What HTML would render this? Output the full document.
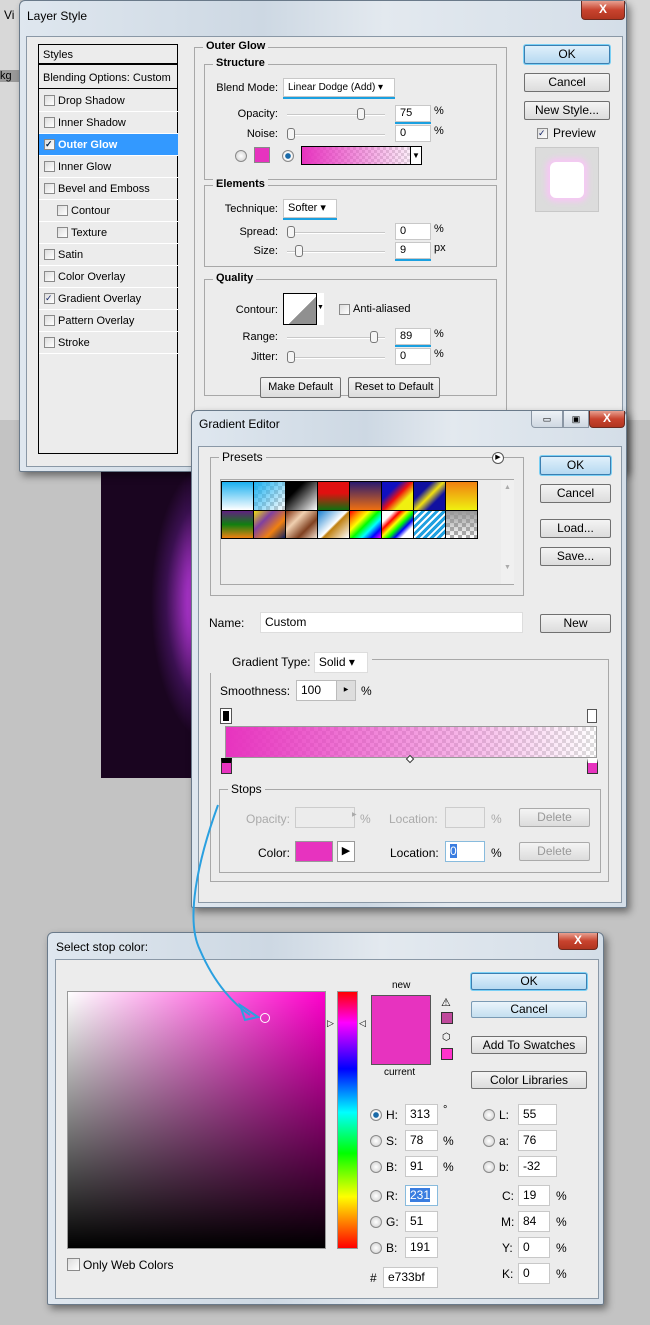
<!DOCTYPE html>
<html><head><meta charset="utf-8"><style>
*{box-sizing:border-box;margin:0;padding:0}
body{width:650px;height:1325px;background:#c3c3c3;position:relative;overflow:hidden;font-family:"Liberation Sans",sans-serif;font-size:11px;color:#000}
div,span{position:absolute}
.win{background:linear-gradient(90deg,#dfe7ef,#cdd8e3 40%,#e3e9ef 60%,#d4dee8);border:1px solid #6a7a8a;border-radius:6px 6px 2px 2px;box-shadow:3px 4px 8px rgba(0,0,0,.45)}
.cl{background:#ececec;border:1px solid #8a98a6}
.tt{font-size:12px}
.x{width:44px;height:19px;top:0;background:linear-gradient(#e8a090,#c8432e 50%,#b03520);border:1px solid #6b2a20;border-top:none;border-radius:0 0 4px 4px;color:#fff;font-weight:bold;text-align:center;line-height:17px;font-size:12px}
.fs{border:1px solid #a8a8a8}
.lg{background:#ececec;padding:0 3px;font-weight:bold;top:-8px;left:8px}
.btn{border:1px solid #707070;border-radius:2px;background:linear-gradient(#f4f4f4,#dcdcdc);text-align:center;font-size:12px}
.ok{border-color:#3c7fb1;background:linear-gradient(#e0f0fb,#b6d9f1);box-shadow:0 0 0 1px #7ad0f5}
.in{background:#fff;border:1px solid #c8c8c8;padding-left:4px}
.cb{width:11px;height:11px;border:1px solid #8a8a8a;background:linear-gradient(135deg,#ddd,#fff)}
.rd{width:12px;height:12px;border:1px solid #8a8a8a;border-radius:50%;background:radial-gradient(#fff,#ccc)}
.ul{height:2px;background:#1aa0e0}
.li{left:0;width:139px;height:22px;border-bottom:1px solid #fff;line-height:22px}
.sl{height:2px;background:#c8c8c8;border-bottom:1px solid #fff}
.th{width:8px;height:12px;border:1px solid #777;border-radius:3px;background:#f5f5f5}
.r{text-align:right}
.chk{background:repeating-conic-gradient(#ddd 0 25%,#fff 0 50%) 0 0/8px 8px}
</style></head><body>

<!-- background image -->
<div style="left:101px;top:472px;width:92px;height:306px;background:radial-gradient(ellipse 60px 140px at 110px 130px,#e050f0 0,#a030c0 40%,#3a1050 75%,#1a0520 100%)"></div>
<div style="left:0;top:0;width:20px;height:420px;background:#d8d8d8"></div>
<div style="left:4px;top:8px;font-size:12px">Vi</div>
<div style="left:0;top:70px;font-size:11px;background:#999;width:20px">kg</div>
<div style="left:627px;top:0;width:23px;height:420px;background:#d8d8d8"></div>

<!-- Layer Style -->
<div class="win" style="left:19px;top:0;width:608px;height:472px">
 <div class="tt" style="left:7px;top:8px">Layer Style</div>
 <div class="x" style="left:561px">X</div>
 <div class="cl" style="left:6px;top:35px;width:597px;height:431px">
  <div style="left:11px;top:7px;width:140px;height:410px;border:1px solid #000;background:#ececec">
   <div class="li" style="top:0;height:20px;line-height:20px;padding-left:4px;border-bottom:2px solid #000">Styles</div>
   <div class="li" style="top:22px;padding-left:4px;border-bottom:1px solid #000">Blending Options: Custom</div>
   <div class="li" style="top:45px"><span class="cb" style="left:5px;top:5px"></span><span style="left:19px">Drop Shadow</span></div>
   <div class="li" style="top:67px"><span class="cb" style="left:5px;top:5px"></span><span style="left:19px">Inner Shadow</span></div>
   <div class="li" style="top:89px;background:#3399ff;color:#fff;font-weight:bold"><span class="cb" style="left:5px;top:5px;color:#024;font-size:9px;line-height:9px">✓</span><span style="left:19px">Outer Glow</span></div>
   <div class="li" style="top:111px"><span class="cb" style="left:5px;top:5px"></span><span style="left:19px">Inner Glow</span></div>
   <div class="li" style="top:133px"><span class="cb" style="left:5px;top:5px"></span><span style="left:19px">Bevel and Emboss</span></div>
   <div class="li" style="top:155px"><span class="cb" style="left:18px;top:5px"></span><span style="left:32px">Contour</span></div>
   <div class="li" style="top:177px"><span class="cb" style="left:18px;top:5px"></span><span style="left:32px">Texture</span></div>
   <div class="li" style="top:199px"><span class="cb" style="left:5px;top:5px"></span><span style="left:19px">Satin</span></div>
   <div class="li" style="top:221px"><span class="cb" style="left:5px;top:5px"></span><span style="left:19px">Color Overlay</span></div>
   <div class="li" style="top:243px"><span class="cb" style="left:5px;top:5px;font-size:9px;line-height:9px;color:#126">✓</span><span style="left:19px">Gradient Overlay</span></div>
   <div class="li" style="top:265px"><span class="cb" style="left:5px;top:5px"></span><span style="left:19px">Pattern Overlay</span></div>
   <div class="li" style="top:287px"><span class="cb" style="left:5px;top:5px"></span><span style="left:19px">Stroke</span></div>
  </div>
  <div class="fs" style="left:167px;top:10px;width:313px;height:430px;border-bottom:none">
   <span class="lg">Outer Glow</span>
   <div class="fs" style="left:9px;top:16px;width:293px;height:116px"><span class="lg">Structure</span>
    <span class="r" style="left:0;top:17px;width:73px">Blend Mode:</span>
    <span class="in" style="left:78px;top:13px;width:112px;height:19px;line-height:17px;font-size:10px">Linear Dodge (Add) ▾</span>
    <span class="ul" style="left:78px;top:32px;width:112px"></span>
    <span class="r" style="left:0;top:43px;width:73px">Opacity:</span>
    <span class="sl" style="left:82px;top:49px;width:98px"></span><span class="th" style="left:152px;top:43px"></span>
    <span class="in" style="left:190px;top:40px;width:36px;height:17px;line-height:15px">75</span><span class="ul" style="left:190px;top:57px;width:36px"></span><span style="left:229px;top:40px">%</span>
    <span class="r" style="left:0;top:63px;width:73px">Noise:</span>
    <span class="sl" style="left:82px;top:69px;width:98px"></span><span class="th" style="left:82px;top:63px"></span>
    <span class="in" style="left:190px;top:60px;width:36px;height:17px;line-height:15px">0</span><span style="left:229px;top:60px">%</span>
    <span class="rd" style="left:30px;top:85px"></span>
    <span style="left:49px;top:82px;width:16px;height:16px;background:#e733bf;border:1px solid #888"></span>
    <span class="rd" style="left:77px;top:85px;background:radial-gradient(#1a6aa8 35%,#fff 45%,#ccc)"></span>
    <span style="left:96px;top:81px;width:121px;height:19px;border:1px solid #000;background:linear-gradient(90deg,#e733bf,rgba(231,51,191,0)),repeating-conic-gradient(#ddd 0 25%,#fff 0 50%) 0 0/6px 6px"></span>
    <span style="left:205px;top:81px;width:12px;height:19px;border:1px solid #000;background:#fff;font-size:8px;text-align:center;line-height:17px">▼</span>
   </div>
   <div class="fs" style="left:9px;top:137px;width:293px;height:82px"><span class="lg">Elements</span>
    <span class="r" style="left:0;top:17px;width:73px">Technique:</span>
    <span class="in" style="left:78px;top:13px;width:54px;height:19px;line-height:17px">Softer ▾</span><span class="ul" style="left:78px;top:32px;width:54px"></span>
    <span class="r" style="left:0;top:40px;width:73px">Spread:</span>
    <span class="sl" style="left:82px;top:46px;width:98px"></span><span class="th" style="left:82px;top:40px"></span>
    <span class="in" style="left:190px;top:37px;width:36px;height:17px;line-height:15px">0</span><span style="left:229px;top:37px">%</span>
    <span class="r" style="left:0;top:59px;width:73px">Size:</span>
    <span class="sl" style="left:82px;top:65px;width:98px"></span><span class="th" style="left:90px;top:59px"></span>
    <span class="in" style="left:190px;top:56px;width:36px;height:17px;line-height:15px">9</span><span class="ul" style="left:190px;top:73px;width:36px"></span><span style="left:229px;top:56px">px</span>
   </div>
   <div class="fs" style="left:9px;top:231px;width:293px;height:117px"><span class="lg">Quality</span>
    <span class="r" style="left:0;top:24px;width:73px">Contour:</span>
    <span style="left:78px;top:13px;width:41px;height:32px;border:1px solid #000;background:linear-gradient(135deg,#fff 50%,#909090 50%)"></span>
    <span style="left:111px;top:13px;width:8px;height:32px;border-left:1px solid #000;background:#fff;font-size:7px;line-height:30px">▼</span>
    <span class="cb" style="left:134px;top:24px"></span><span style="left:148px;top:23px">Anti-aliased</span>
    <span class="r" style="left:0;top:51px;width:73px">Range:</span>
    <span class="sl" style="left:82px;top:57px;width:98px"></span><span class="th" style="left:165px;top:51px"></span>
    <span class="in" style="left:190px;top:48px;width:36px;height:17px;line-height:15px">89</span><span class="ul" style="left:190px;top:65px;width:36px"></span><span style="left:229px;top:48px">%</span>
    <span class="r" style="left:0;top:71px;width:73px">Jitter:</span>
    <span class="sl" style="left:82px;top:77px;width:98px"></span><span class="th" style="left:82px;top:71px"></span>
    <span class="in" style="left:190px;top:68px;width:36px;height:17px;line-height:15px">0</span><span style="left:229px;top:68px">%</span>
   </div>
   <span class="btn" style="left:65px;top:329px;width:81px;height:21px;line-height:19px;font-size:11px">Make Default</span>
   <span class="btn" style="left:153px;top:329px;width:92px;height:21px;line-height:19px;font-size:11px">Reset to Default</span>
  </div>
  <span class="btn ok" style="left:497px;top:8px;width:86px;height:19px;line-height:17px">OK</span>
  <span class="btn" style="left:497px;top:36px;width:86px;height:19px;line-height:17px">Cancel</span>
  <span class="btn" style="left:497px;top:64px;width:86px;height:19px;line-height:17px">New Style...</span>
  <span class="cb" style="left:510px;top:91px;font-size:9px;line-height:9px;color:#126">✓</span><span style="left:526px;top:89px;font-size:12px">Preview</span>
  <span style="left:508px;top:110px;width:64px;height:65px;background:#dcdcdc;border:1px solid #c8c8c8"><span style="left:14px;top:14px;width:34px;height:36px;border-radius:6px;background:#fff;box-shadow:0 0 6px 4px #f6c8f4"></span></span>
 </div>
</div>

<!-- Gradient Editor -->
<div class="win" style="left:191px;top:410px;width:436px;height:498px">
 <div class="tt" style="left:7px;top:6px">Gradient Editor</div>
 <span style="left:339px;top:0;width:32px;height:17px;border:1px solid #8a96a4;border-top:none;border-radius:0 0 0 4px;background:linear-gradient(#eef2f6,#cfd8e2);text-align:center;font-size:9px;line-height:16px">▭</span>
 <span style="left:371px;top:0;width:26px;height:17px;border:1px solid #8a96a4;border-top:none;background:linear-gradient(#eef2f6,#cfd8e2);text-align:center;font-size:9px;line-height:16px">▣</span>
 <div class="x" style="left:397px;width:36px;height:17px;line-height:15px">X</div>
 <div class="cl" style="left:6px;top:35px;width:424px;height:457px">
  <div class="fs" style="left:11px;top:10px;width:314px;height:139px"><span class="lg" style="font-weight:normal;font-size:12px">Presets</span>
   <span style="left:281px;top:-6px;width:12px;height:12px;border:1px solid #555;border-radius:50%;background:#fff;font-size:7px;line-height:10px;text-align:center">▶</span>
   <span style="left:9px;top:21px;width:294px;height:106px;background:#ececec;border:1px solid #a8a8a8;border-right:none"></span>
   <span style="left:290px;top:22px;width:13px;height:104px;background:#f0f0f0;color:#aaa;font-size:7px;text-align:center;line-height:10px;padding-top:3px">▲<br><br><br><br><br><br><br><br>▼</span>
   <span style="left:10px;top:23px;width:257px;height:58px;border:1px solid #000;display:grid;grid-template-columns:repeat(8,1fr);background:#000;gap:1px">
    <i style="background:linear-gradient(#1ab0f0,#fff)"></i><i style="background:linear-gradient(135deg,#1ab0f0,transparent),repeating-conic-gradient(#ccc 0 25%,#fff 0 50%) 0 0/8px 8px"></i><i style="background:linear-gradient(135deg,#000 30%,#fff)"></i><i style="background:linear-gradient(#e01010 40%,#107010)"></i><i style="background:linear-gradient(#2a1a70,#f07010)"></i><i style="background:linear-gradient(135deg,#1010c0 30%,#f01010 50%,#f0f010 70%)"></i><i style="background:linear-gradient(135deg,#1010a0 30%,#f0e010 50%,#1010a0 70%)"></i><i style="background:linear-gradient(#f08010,#f0f010)"></i>
    <i style="background:linear-gradient(#602080,#108010,#f08010)"></i><i style="background:linear-gradient(135deg,#f0e010,#8040a0,#f08010,#102060)"></i><i style="background:linear-gradient(135deg,#803010,#f0d0b0,#804020,#f0e0d0)"></i><i style="background:linear-gradient(135deg,#1a80d0,#fff 50%,#c08010 55%,#fff)"></i><i style="background:linear-gradient(135deg,#f00,#f80,#ff0,#0f0,#0ff,#00f,#f0f)"></i><i style="background:linear-gradient(135deg,#fff 20%,#f00,#ff0,#0f0,#00f,#fff 80%)"></i><i style="background:repeating-linear-gradient(135deg,#20a0e0 0 3px,#fff 3px 5px)"></i><i class="chk" style="background:linear-gradient(#999,transparent),repeating-conic-gradient(#aaa 0 25%,#fff 0 50%) 0 0/8px 8px"></i>
   </span>
  </div>
  <span class="btn ok" style="left:341px;top:9px;width:71px;height:19px;line-height:17px">OK</span>
  <span class="btn" style="left:341px;top:37px;width:71px;height:19px;line-height:17px">Cancel</span>
  <span class="btn" style="left:341px;top:72px;width:71px;height:19px;line-height:17px">Load...</span>
  <span class="btn" style="left:341px;top:100px;width:71px;height:19px;line-height:17px">Save...</span>
  <span style="left:10px;top:169px;font-size:12px">Name:</span>
  <span class="in" style="left:61px;top:165px;width:263px;height:21px;line-height:19px;font-size:12px;border-color:#ddd">Custom</span>
  <span class="btn" style="left:341px;top:167px;width:71px;height:19px;line-height:17px">New</span>
  <div class="fs" style="left:11px;top:212px;width:399px;height:223px">
   <span style="left:-1px;top:-8px;background:#ececec;padding:0 4px 0 22px;font-size:12px;line-height:16px">Gradient Type: <span style="position:relative;display:inline-block;background:#fff;border:1px solid #ddd;width:54px;height:21px;line-height:19px;padding-left:4px">Solid ▾</span></span>
   <span style="left:9px;top:24px;font-size:12px">Smoothness:</span>
   <span class="in" style="left:85px;top:20px;width:60px;height:21px;line-height:19px;font-size:12px;border-color:#bbb">100</span>
   <span style="left:125px;top:21px;width:19px;height:19px;background:#ddd;border-left:1px solid #bbb;font-size:6px;text-align:center;line-height:19px">▶</span>
   <span style="left:150px;top:24px;font-size:12px">%</span>
   <span style="left:10px;top:49px;width:10px;height:14px;background:#000;border:2px solid #fff;outline:1px solid #555"></span>
   <span style="left:376px;top:49px;width:10px;height:14px;background:#fff;border:1px solid #555"></span>
   <span style="left:14px;top:66px;width:372px;height:32px;border:1px solid #999;background:linear-gradient(90deg,#e733bf,rgba(231,51,191,0)),repeating-conic-gradient(#ddd 0 25%,#fff 0 50%) 0 0/8px 8px"></span>
   <span style="left:196px;top:96px;width:6px;height:6px;border:1px solid #333;transform:rotate(45deg);background:#fff"></span>
   <span style="left:10px;top:98px;width:11px;height:16px;border:1px solid #333;border-top:5px solid #000;background:#e733bf"></span>
   <span style="left:376px;top:98px;width:11px;height:16px;border:1px solid #333;border-top:5px solid #fff;background:#e733bf"></span>
   <div class="fs" style="left:8px;top:129px;width:382px;height:84px"><span class="lg" style="font-weight:normal;font-size:12px">Stops</span>
    <span class="r" style="left:0;top:22px;width:70px;color:#aaa;font-size:12px">Opacity:</span>
    <span style="left:75px;top:17px;width:60px;height:21px;border:1px solid #ccc"></span><span style="left:132px;top:21px;color:#aaa;font-size:6px">▶</span><span style="left:140px;top:22px;color:#aaa;font-size:12px">%</span>
    <span style="left:169px;top:22px;color:#aaa;font-size:12px">Location:</span>
    <span style="left:225px;top:17px;width:40px;height:21px;border:1px solid #ccc"></span><span style="left:271px;top:22px;color:#aaa;font-size:12px">%</span>
    <span class="btn" style="left:299px;top:18px;width:71px;height:19px;line-height:17px;color:#999;border-color:#aaa">Delete</span>
    <span class="r" style="left:0;top:56px;width:70px;font-size:12px">Color:</span>
    <span style="left:75px;top:51px;width:38px;height:21px;background:#e733bf;border:1px solid #999"></span>
    <span style="left:117px;top:51px;width:18px;height:21px;border:1px solid #999;background:#fff;font-size:11px;line-height:19px;text-align:center">▶</span>
    <span style="left:170px;top:56px;font-size:12px">Location:</span>
    <span class="in" style="left:225px;top:51px;width:40px;height:21px;border-color:#8bd;font-size:12px;line-height:19px"><b style="font-weight:normal;background:#3a7de0;color:#fff">0</b></span>
    <span style="left:271px;top:56px;font-size:12px">%</span>
    <span class="btn" style="left:299px;top:52px;width:71px;height:19px;line-height:17px;color:#999;border-color:#aaa">Delete</span>
   </div>
  </div>
 </div>
</div>

<!-- Select stop color -->
<div class="win" style="left:47px;top:932px;width:557px;height:373px">
 <div class="tt" style="left:8px;top:7px">Select stop color:</div>
 <div class="x" style="left:510px;width:40px;height:17px;line-height:15px">X</div>
 <div class="cl" style="left:7px;top:26px;width:544px;height:340px">
  <span style="left:11px;top:31px;width:259px;height:258px;border:1px solid #999;background:linear-gradient(transparent,#000),linear-gradient(90deg,#fff,#ff00cc)"></span>
  <span style="left:204px;top:53px;width:10px;height:10px;border:1px solid #fff;border-radius:50%"></span>
  <span style="left:281px;top:31px;width:21px;height:258px;border:1px solid #999;background:linear-gradient(#f00,#f0f 12%,#00f 30%,#0ff 47%,#0f0 63%,#ff0 80%,#f00)"></span>
  <span style="left:271px;top:58px;font-size:9px">▷</span><span style="left:303px;top:58px;font-size:9px">◁</span>
  <span style="left:336px;top:20px;font-size:10px">new</span>
  <span style="left:315px;top:35px;width:60px;height:70px;border:1px solid #555;background:#e733bf"></span>
  <span style="left:328px;top:107px;font-size:10px">current</span>
  <span style="left:385px;top:36px;font-size:11px">⚠</span><span style="left:385px;top:52px;width:12px;height:12px;background:#c04a9c;border:1px solid #333"></span>
  <span style="left:386px;top:72px;font-size:10px">⬡</span><span style="left:385px;top:88px;width:12px;height:12px;background:#ff33cc;border:1px solid #333"></span>
  <span class="btn ok" style="left:415px;top:13px;width:116px;height:17px;line-height:15px">OK</span>
  <span class="btn" style="left:415px;top:41px;width:116px;height:17px;line-height:15px;background:linear-gradient(#eaf4fb,#c4dff0);border-color:#7a9ab4">Cancel</span>
  <span class="btn" style="left:415px;top:76px;width:116px;height:18px;line-height:16px">Add To Swatches</span>
  <span class="btn" style="left:415px;top:111px;width:116px;height:18px;line-height:16px">Color Libraries</span>
  <span class="rd" style="left:314px;top:149px;background:radial-gradient(#1a6aa8 35%,#fff 45%,#ccc)"></span><span style="left:330px;top:148px;font-size:12px">H:</span><span class="in" style="left:349px;top:144px;width:33px;height:21px;line-height:19px;font-size:12px">313</span><span style="left:387px;top:144px;font-size:11px">°</span>
  <span class="rd" style="left:314px;top:175px"></span><span style="left:330px;top:174px;font-size:12px">S:</span><span class="in" style="left:349px;top:170px;width:33px;height:21px;line-height:19px;font-size:12px">78</span><span style="left:387px;top:174px;font-size:12px">%</span>
  <span class="rd" style="left:314px;top:201px"></span><span style="left:330px;top:200px;font-size:12px">B:</span><span class="in" style="left:349px;top:196px;width:33px;height:21px;line-height:19px;font-size:12px">91</span><span style="left:387px;top:200px;font-size:12px">%</span>
  <span class="rd" style="left:314px;top:230px"></span><span style="left:330px;top:229px;font-size:12px">R:</span><span class="in" style="left:349px;top:225px;width:33px;height:21px;line-height:19px;font-size:12px;border-color:#8bd"><b style="font-weight:normal;background:#3a7de0;color:#fff">231</b></span>
  <span class="rd" style="left:314px;top:256px"></span><span style="left:330px;top:255px;font-size:12px">G:</span><span class="in" style="left:349px;top:251px;width:33px;height:21px;line-height:19px;font-size:12px">51</span>
  <span class="rd" style="left:314px;top:282px"></span><span style="left:330px;top:281px;font-size:12px">B:</span><span class="in" style="left:349px;top:277px;width:33px;height:21px;line-height:19px;font-size:12px">191</span>
  <span style="left:314px;top:311px;font-size:12px">#</span><span class="in" style="left:327px;top:307px;width:55px;height:21px;line-height:19px;font-size:12px">e733bf</span>
  <span class="rd" style="left:427px;top:149px"></span><span style="left:443px;top:148px;font-size:12px">L:</span><span class="in" style="left:462px;top:144px;width:39px;height:21px;line-height:19px;font-size:12px">55</span>
  <span class="rd" style="left:427px;top:175px"></span><span style="left:443px;top:174px;font-size:12px">a:</span><span class="in" style="left:462px;top:170px;width:39px;height:21px;line-height:19px;font-size:12px">76</span>
  <span class="rd" style="left:427px;top:201px"></span><span style="left:443px;top:200px;font-size:12px">b:</span><span class="in" style="left:462px;top:196px;width:39px;height:21px;line-height:19px;font-size:12px">-32</span>
  <span style="left:446px;top:229px;font-size:12px">C:</span><span class="in" style="left:462px;top:225px;width:32px;height:21px;line-height:19px;font-size:12px">19</span><span style="left:500px;top:229px;font-size:12px">%</span>
  <span style="left:445px;top:255px;font-size:12px">M:</span><span class="in" style="left:462px;top:251px;width:32px;height:21px;line-height:19px;font-size:12px">84</span><span style="left:500px;top:255px;font-size:12px">%</span>
  <span style="left:446px;top:281px;font-size:12px">Y:</span><span class="in" style="left:462px;top:277px;width:32px;height:21px;line-height:19px;font-size:12px">0</span><span style="left:500px;top:281px;font-size:12px">%</span>
  <span style="left:446px;top:307px;font-size:12px">K:</span><span class="in" style="left:462px;top:303px;width:32px;height:21px;line-height:19px;font-size:12px">0</span><span style="left:500px;top:307px;font-size:12px">%</span>
  <span class="cb" style="left:11px;top:298px;width:13px;height:13px"></span><span style="left:27px;top:298px;font-size:12px">Only Web Colors</span>
 </div>
</div>

<svg style="position:absolute;left:0;top:0" width="650" height="1325"><path d="M218 805 C198 860 185 920 200 950 C215 985 235 1005 250 1015" fill="none" stroke="#2aa0e0" stroke-width="2"/><path d="M240 1005 L258 1017 L245 1020 Z" fill="none" stroke="#2aa0e0" stroke-width="2"/></svg>
</body></html>
